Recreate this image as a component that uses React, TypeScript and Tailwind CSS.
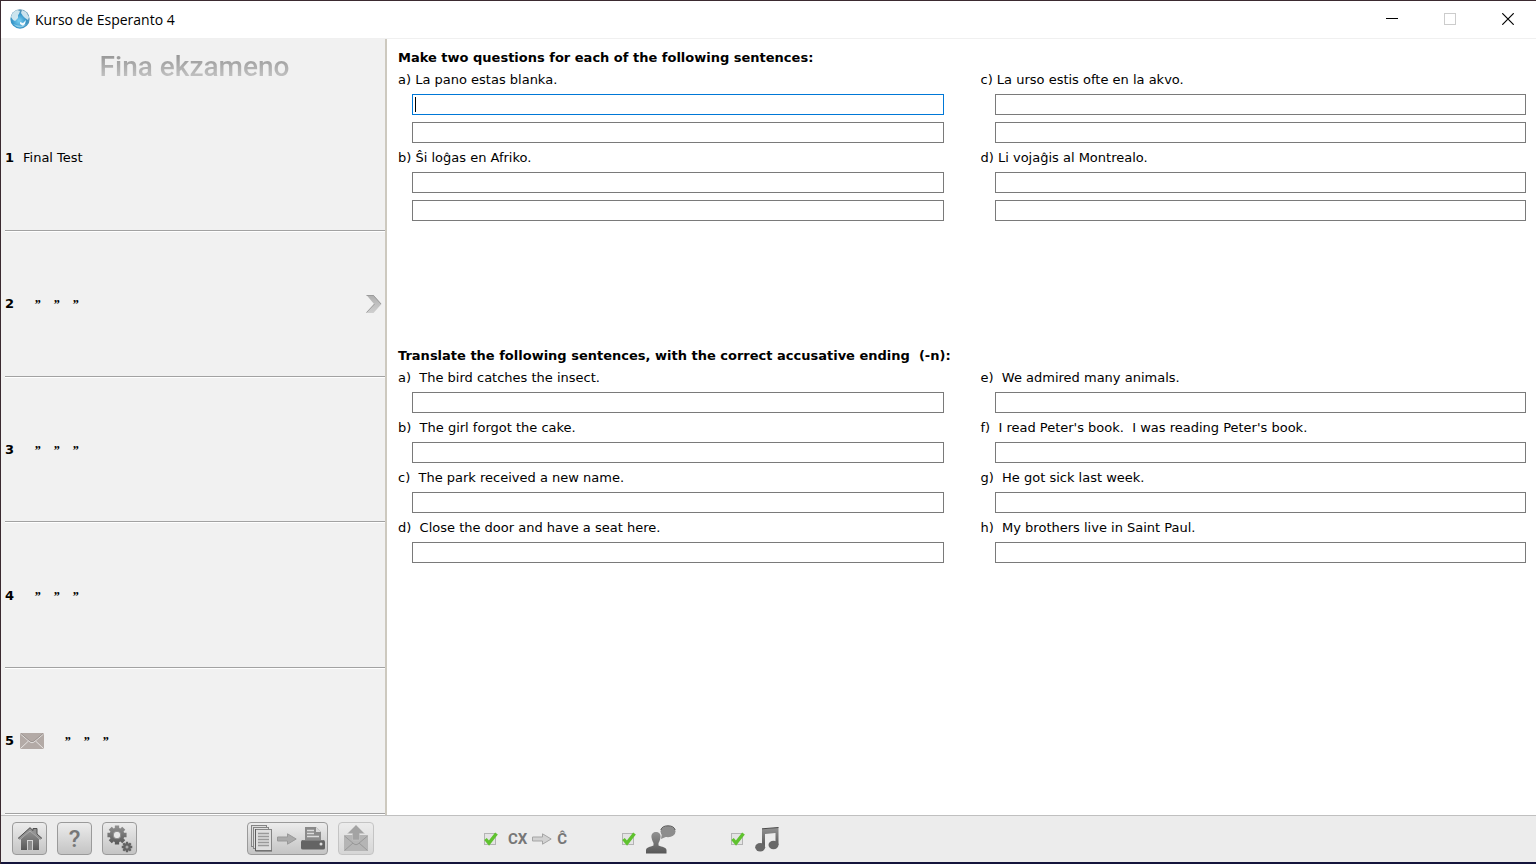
import type { ReactNode } from "react";

function Gradients() {
  return (
    <svg width="0" height="0" className="absolute" aria-hidden="true">
      <defs>
        <linearGradient id="dark" x1="0" y1="0" x2="0" y2="1">
          <stop offset="0" stopColor="#929292" />
          <stop offset="1" stopColor="#575757" />
        </linearGradient>
        <linearGradient id="pale" x1="0" y1="0" x2="0" y2="1">
          <stop offset="0" stopColor="#b0b0b0" />
          <stop offset="1" stopColor="#cfcfcf" />
        </linearGradient>
        <radialGradient id="globe" cx="0.45" cy="0.6" r="0.6">
          <stop offset="0" stopColor="#7cd0f2" />
          <stop offset="0.6" stopColor="#3595c9" />
          <stop offset="1" stopColor="#5d93b0" />
        </radialGradient>
      </defs>
    </svg>
  );
}

function Globe() {
  return (
    <svg width="20" height="20" viewBox="0 0 20 20" aria-hidden="true">
      <circle cx="10" cy="10" r="9.7" fill="url(#globe)" />
      <path d="M1 8 Q2 3 7 1 L10 2 L9 5 L8 6 L8 9 L5 12 L3 11 Z" fill="#dcecf2" opacity="0.9" />
      <path d="M12 1 L16 3 L19 8 L18 11 L15 9 L13 7 L11 4 Z" fill="#e4f1f6" opacity="0.85" />
      <path d="M10 13 L13 14 L16 11 L15 15 L13 17 L10 15 Z" fill="#f2fafd" />
      <path d="M3 15 Q10 22 17 15 Q11 18.500 3 15" fill="#a8dcf0" opacity="0.7" />
    </svg>
  );
}

function Envelope() {
  return (
    <svg width="24" height="16" viewBox="0 0 24 16" aria-hidden="true">
      <rect width="24" height="16" rx="1" fill="#b3aaa6" />
      <path d="M0.500 1 L10 9 Q12 10.500 14 9 L23.500 1 M0.500 15.500 L8.500 8 M23.500 15.500 L15.500 8" fill="none" stroke="#e6e3e1" strokeWidth="1" />
      <path d="M1 0.500 L10 8 Q12 9.500 14 8 L23 0.500" fill="none" stroke="#918986" strokeWidth="0.700" />
    </svg>
  );
}

function Chevron() {
  return (
    <svg width="16" height="18" viewBox="0 0 16 18" aria-hidden="true">
      <path d="M0.500 0 H7.500 L15.500 9 L7.500 18 H0 L8 9 Z" fill="url(#pale)" />
      <path d="M0.500 0.500 H7.500 L15 9 M0.500 17.500 L8.500 9" fill="none" stroke="#989898" strokeWidth="0.900" />
    </svg>
  );
}

function HomeIcon() {
  return (
    <svg width="24" height="24" viewBox="0 0 24 24" aria-hidden="true">
      <path d="M3 12 L12 4 L21 12 V23 H15 V13 H9 V23 H3 Z" fill="url(#dark)" />
      <rect x="10" y="14" width="4" height="9" fill="#8b8b8b" />
      <path d="M15 2 H19 V8 L15 5 Z" fill="#909090" />
      <path d="M1 12 L12 2 L23 12" fill="none" stroke="#929292" strokeWidth="2.400" />
      <path d="M0 11.500 L12 0.700 L15 3.500 V1.500 H19 V7 L24 11.500" fill="none" stroke="#4f4f4f" strokeWidth="1" />
    </svg>
  );
}

function gear(cx: number, cy: number, outer: number, inner: number) {
  const points: string[] = [];
  for (let i = 0; i < 8; i++) {
    const a = (i * Math.PI) / 4;
    for (const [d, r] of [[-0.3, inner], [-0.22, outer], [0.22, outer], [0.3, inner]]) {
      points.push(`${(cx + r * Math.cos(a + d)).toFixed(2)},${(cy + r * Math.sin(a + d)).toFixed(2)}`);
    }
  }
  return points.join(" ");
}

function GearsIcon() {
  return (
    <svg width="26" height="28" viewBox="0 0 26 28" aria-hidden="true">
      <polygon points={gear(10, 10, 9.8, 7.4)} fill="url(#dark)" />
      <circle cx="10" cy="10" r="3.800" fill="#e6e6e6" stroke="#8a8a8a" />
      <polygon points={gear(20, 22, 5.4, 4)} fill="#626262" />
      <circle cx="20" cy="22" r="1.500" fill="#aaaaaa" />
    </svg>
  );
}

function PagesIcon() {
  return (
    <svg width="22" height="27" viewBox="0 0 22 27" aria-hidden="true">
      <g fill="#dedede" stroke="#858585">
        <rect x="0.500" y="0.500" width="15" height="21" />
        <rect x="2.500" y="2.500" width="15" height="21" />
        <rect x="4.500" y="4.500" width="16" height="21" />
      </g>
      <path d="M4.500 4 V26 H21" fill="none" stroke="#5e5e5e" />
      <path d="M7 8.500 H18 M7 11.500 H18 M7 14.500 H18 M7 17.500 H18 M7 20.500 H18" stroke="#999" strokeWidth="1.300" />
    </svg>
  );
}

function ArrowIcon({ light = false }: { light?: boolean }) {
  return (
    <svg width="20" height="12" viewBox="0 0 20 12" aria-hidden="true">
      <path
        d="M0.500 4 H10.500 V0.800 L19.200 6 L10.500 11.200 V8 H0.500 Z"
        fill={light ? "#d2d2d2" : "#aaa"}
        stroke={light ? "#a5a5a5" : "#999"}
      />
    </svg>
  );
}

function PrinterIcon() {
  return (
    <svg width="24" height="23" viewBox="0 0 24 23" aria-hidden="true">
      <path d="M4 0 H15 L20 5 V13 H4 Z" fill="#8a8a8a" />
      <path d="M15 0 V5 H20 Z" fill="#d8d8d8" />
      <path d="M6 3.500 H13 M6 6.500 H13 M6 9.500 H18" stroke="#dadada" strokeWidth="1.300" />
      <path d="M2 13 H22 Q24 13 24 15 V21 Q24 22.500 22 22.500 H2 Q0 22.500 0 21 V15 Q0 13 2 13 Z" fill="#646464" />
      <path d="M2 13.500 H22" stroke="#7d7d7d" />
      <circle cx="20" cy="17" r="1.500" fill="#dedede" />
    </svg>
  );
}

function SendIcon() {
  return (
    <svg width="24" height="27" viewBox="0 0 24 27" aria-hidden="true">
      <rect x="0" y="10" width="24" height="16" rx="1" fill="#b5b5b5" />
      <path d="M0.500 11 L10 19 Q12 20.500 14 19 L23.500 11 M0.500 25.500 L9 18 M23.500 25.500 L15 18" fill="none" stroke="#989898" />
      <path d="M12 0 L20.500 8.500 H15.500 V15 H8.500 V8.500 H3.500 Z" fill="#a3a3a3" stroke="#c8c8c8" strokeWidth="0.500" />
    </svg>
  );
}

function PersonIcon() {
  return (
    <svg width="30" height="29" viewBox="0 0 30 29" aria-hidden="true">
      <ellipse cx="22" cy="6.500" rx="7.500" ry="5.800" fill="#8d8d8d" />
      <path d="M16 8 L15 14 L22 11 Z" fill="#8d8d8d" />
      <path d="M14.800 5 Q16 0.800 22 0.800 Q28 0.800 29.200 5" fill="none" stroke="#5a5a5a" />
      <path d="M10 7 C13.500 7 15 9.500 14.500 12.500 C14 15.500 13 17 12.500 18 V20.500 C16 22 20 22 20.500 25 V28.500 H0 V25 C0.500 22 4 22 7.500 20.500 V18 C7 17 6 15.500 5.500 12.500 C5 9.500 6.500 7 10 7 Z" fill="url(#dark)" />
    </svg>
  );
}

function NotesIcon() {
  return (
    <svg width="24" height="25" viewBox="0 0 24 25" aria-hidden="true">
      <path d="M7 2 L23.500 0.500 V18 H20.500 V6 L10 7 V20 H7 Z" fill="url(#dark)" />
      <path d="M7 1.800 L23.500 0.500" stroke="#4a4a4a" />
      <ellipse cx="5.200" cy="20.200" rx="5" ry="4.200" fill="#686868" />
      <ellipse cx="18.500" cy="18" rx="5" ry="4.200" fill="#686868" />
    </svg>
  );
}

const items = ["1", "2", "3", "4", "5"];

function Ditto() {
  return <span className="w-[7px] font-['Liberation_Serif',serif] font-bold italic">”</span>;
}

function Sidebar() {
  return (
    <aside className="flex w-[386px] shrink-0 flex-col border-r-2 border-[#cdc9bf] bg-[#f1f1f1]">
      <h1 className="h-[47px] pt-1 pl-[3px] text-center font-['Roboto',sans-serif] text-[28px] font-medium leading-[48px]">
        <span className="bg-linear-to-b from-[#8e8e8e] to-[#cecece] bg-clip-text text-transparent">Fina ekzameno</span>
      </h1>
      <ol className="flex flex-1 flex-col pl-1">
        {items.map((n) => (
          <li key={n} className="flex flex-1 border-b border-white">
            <a href={`#${n}`} className="flex flex-1 items-center border-b border-[#a2a2a2] pr-[3px]">
              <b className="w-[15px]">{n}</b>
              {n === "5" && <Envelope />}
              {n === "1" ? (
                <span className="pl-[3px]">Final Test</span>
              ) : (
                <span className={n === "5" ? "flex gap-3 pl-5" : "flex gap-3 pl-[14px]"}>
                  <Ditto />
                  <Ditto />
                  <Ditto />
                </span>
              )}
              {n === "2" && (
                <span className="ml-auto">
                  <Chevron />
                </span>
              )}
            </a>
          </li>
        ))}
      </ol>
    </aside>
  );
}

type Question = { id: string; text: string };

function QuestionRow({ q, fields, focus }: { q: Question; fields: number; focus?: boolean }) {
  return (
    <div className="pb-1">
      <label htmlFor={`${q.id}-0`} className="block whitespace-pre leading-[22px]">
        {q.text}
      </label>
      <div className="flex flex-col gap-[7px] pt-[3px] pl-[14px]">
        {Array.from({ length: fields }, (_, i) => (
          <div key={i} className="relative flex">
            <input
              id={`${q.id}-${i}`}
              aria-label={q.text}
              placeholder=" "
              autoFocus={focus && i === 0}
              className="peer h-[21px] w-full border border-[#7a7a7a] bg-white px-[3px] outline-none placeholder-shown:caret-transparent focus:border-[#0078d7]"
            />
            <span className="pointer-events-none absolute top-[3px] left-[3px] hidden h-[15px] w-px bg-black peer-focus:peer-placeholder-shown:block" />
          </div>
        ))}
      </div>
    </div>
  );
}

function Section({ title, left, right, fields, focus }: { title: string; left: Question[]; right: Question[]; fields: number; focus?: boolean }) {
  return (
    <section className="min-h-[298px]">
      <h2 className="whitespace-pre font-bold leading-[22px]">{title}</h2>
      <div className="grid grid-cols-2 gap-x-[37px]">
        <div>
          {left.map((q, i) => (
            <QuestionRow key={q.id} q={q} fields={fields} focus={focus && i === 0} />
          ))}
        </div>
        <div>
          {right.map((q) => (
            <QuestionRow key={q.id} q={q} fields={fields} />
          ))}
        </div>
      </div>
    </section>
  );
}

function ToolButton({ label, className, disabled, children }: { label: string; className: string; disabled?: boolean; children: ReactNode }) {
  return (
    <button
      type="button"
      aria-label={label}
      disabled={disabled}
      className={`flex h-[33px] items-center justify-center rounded-[4px] border border-[#9a9a9a] bg-linear-to-b from-[#ececec] to-[#c4c4c4] disabled:border-[#c4c4c4] disabled:to-[#d6d6d6] ${className}`}
    >
      {children}
    </button>
  );
}

function Option({ label, children }: { label: string; children: ReactNode }) {
  return (
    <label className="flex items-center gap-3">
      <span className="relative flex">
        <input type="checkbox" defaultChecked aria-label={label} className="peer size-3 appearance-none border border-[#b4b4b4] bg-[#e4e4e4]" />
        <svg width="15" height="14" viewBox="0 0 15 14" className="pointer-events-none absolute -top-px left-0 hidden peer-checked:block" aria-hidden="true">
          <path d="M1.500 7 L5 11 L12.500 1.500" fill="none" stroke="#5fc22f" strokeWidth="3.400" />
        </svg>
      </span>
      {children}
    </label>
  );
}

export default function App() {
  return (
    <div className="flex h-screen flex-col border-t border-l border-[#3b2a30] bg-white font-['DejaVu_Sans',sans-serif] text-[13px] text-black">
      <Gradients />
      <header className="flex h-[38px] shrink-0 items-center border-b border-[#f0f0f0] pb-px pl-[9px]">
        <Globe />
        <span className="pl-[5px] font-['Open_Sans',sans-serif] text-[14px]">Kurso de Esperanto 4</span>
        <div className="ml-auto flex items-center gap-[46px] pr-[22px]">
          <button type="button" aria-label="Minimize">
            <svg width="12" height="12" viewBox="0 0 12 12">
              <path d="M0 5.500 H12" stroke="#000" />
            </svg>
          </button>
          <button type="button" aria-label="Maximize" disabled>
            <svg width="12" height="12" viewBox="0 0 12 12">
              <rect x="0.500" y="0.500" width="11" height="11" fill="none" stroke="#ccc" />
            </svg>
          </button>
          <button type="button" aria-label="Close">
            <svg width="12" height="12" viewBox="0 0 12 12">
              <path d="M0.300 0.300 L11.700 11.700 M11.700 0.300 L0.300 11.700" stroke="#000" strokeWidth="1.200" />
            </svg>
          </button>
        </div>
      </header>
      <div className="flex min-h-0 flex-1">
        <Sidebar />
        <main className="flex-1 pt-2 pr-[10px] pl-[11px]">
          <Section
            title="Make two questions for each of the following sentences:"
            fields={2}
            focus
            left={[
              { id: "q1a", text: "a) La pano estas blanka." },
              { id: "q1b", text: "b) Ŝi loĝas en Afriko." },
            ]}
            right={[
              { id: "q1c", text: "c) La urso estis ofte en la akvo." },
              { id: "q1d", text: "d) Li vojaĝis al Montrealo." },
            ]}
          />
          <Section
            title="Translate the following sentences, with the correct accusative ending  (-n):"
            fields={1}
            left={[
              { id: "q2a", text: "a)  The bird catches the insect." },
              { id: "q2b", text: "b)  The girl forgot the cake." },
              { id: "q2c", text: "c)  The park received a new name." },
              { id: "q2d", text: "d)  Close the door and have a seat here." },
            ]}
            right={[
              { id: "q2e", text: "e)  We admired many animals." },
              { id: "q2f", text: "f)  I read Peter's book.  I was reading Peter's book." },
              { id: "q2g", text: "g)  He got sick last week." },
              { id: "q2h", text: "h)  My brothers live in Saint Paul." },
            ]}
          />
        </main>
      </div>
      <footer className="flex h-[49px] shrink-0 items-center border-t border-b-2 border-t-[#c0c0c0] border-b-[#14143c] bg-[#ececec] pb-px pl-[11px]">
        <div className="flex gap-[10px]">
          <ToolButton label="Home" className="w-[35px]">
            <HomeIcon />
          </ToolButton>
          <ToolButton label="Help" className="w-[35px]">
            <span className="font-['Roboto',sans-serif] text-[24px] font-medium leading-6 text-[#777]">?</span>
          </ToolButton>
          <ToolButton label="Settings" className="w-[35px]">
            <GearsIcon />
          </ToolButton>
        </div>
        <div className="flex gap-[10px] pl-[110px]">
          <ToolButton label="Print pages" className="w-[81px] gap-1">
            <PagesIcon />
            <ArrowIcon />
            <PrinterIcon />
          </ToolButton>
          <ToolButton label="Send" className="w-[36px]" disabled>
            <SendIcon />
          </ToolButton>
        </div>
        <div className="flex items-center gap-[55px] pt-px pl-[110px]">
          <Option label="CX to Ĉ">
            <span className="flex items-center gap-[5px] font-['Roboto',sans-serif] text-[15px] font-bold text-[#777]">
              CX
              <ArrowIcon light />
              Ĉ
            </span>
          </Option>
          <Option label="Voice">
            <PersonIcon />
          </Option>
          <Option label="Music">
            <NotesIcon />
          </Option>
        </div>
      </footer>
    </div>
  );
}
